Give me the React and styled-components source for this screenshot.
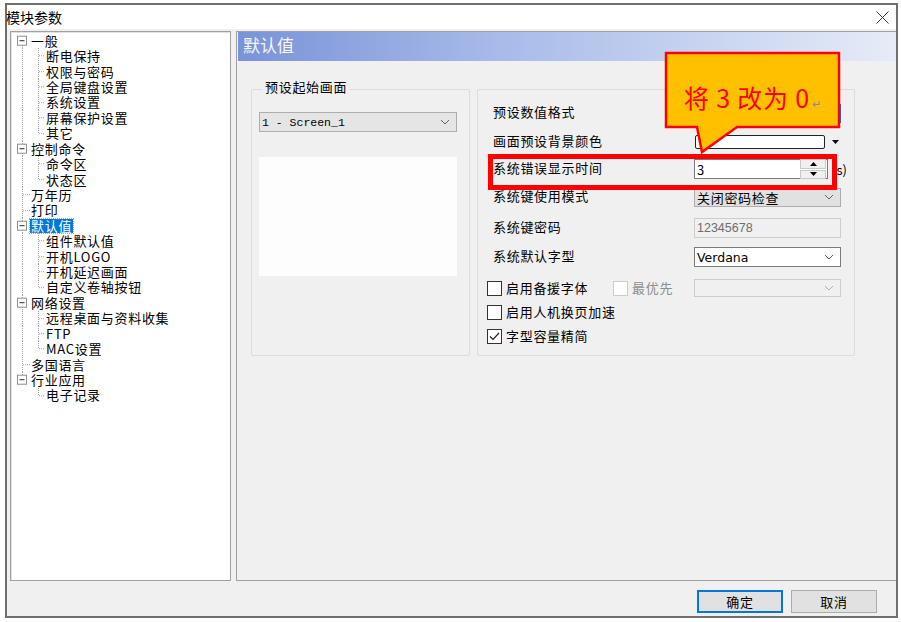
import React from 'react'
import styled, { createGlobalStyle } from 'styled-components'

const GlobalStyle = createGlobalStyle`
  html, body {
    margin: 0;
    padding: 0;
    background: #ffffff;
  }
  body {
    font-family: 'Noto Sans CJK SC', 'Noto Sans', sans-serif;
    color: #000;
  }
`

const tree = [
  { label: '一般', children: ['断电保持', '权限与密码', '全局键盘设置', '系统设置', '屏幕保护设置', '其它'] },
  { label: '控制命令', children: ['命令区', '状态区'] },
  { label: '万年历' },
  { label: '打印' },
  { label: '默认值', selected: true, children: ['组件默认值', '开机LOGO', '开机延迟画面', '自定义卷轴按钮'] },
  { label: '网络设置', children: ['远程桌面与资料收集', 'FTP', 'MAC设置'] },
  { label: '多国语言' },
  { label: '行业应用', children: ['电子记录'] }
]

// flatten the tree into rows with the info needed to draw connectors
const buildRows = () => {
  const rows = []
  tree.forEach((node, i) => {
    const first = i === 0
    const last = i === tree.length - 1
    rows.push({ label: node.label, root: true, first, last, hasKids: !!node.children, selected: node.selected })
    ;(node.children || []).forEach((c, j) => {
      rows.push({ label: c, root: false, parentLast: last, lastChild: j === node.children.length - 1 })
    })
  })
  return rows
}

const ROW_H = 15.43

const Page = styled.div`
  position: relative;
  width: 901px;
  height: 622px;
  padding: 3px 0 0 5px;
  box-sizing: border-box;
`

const Window = styled.div`
  width: 893px;
  height: 615px;
  box-sizing: border-box;
  border: 2px solid #6e6e6e;
  display: flex;
  flex-direction: column;
  background: #f0f0f0;
`

const TitleBar = styled.div`
  height: 24px;
  background: #ffffff;
  display: flex;
  align-items: center;
  justify-content: space-between;
  padding-right: 7px;
`

const Title = styled.span`
  font-size: 14px;
  line-height: 24px;
  margin-left: -1px;
`

const Main = styled.div`
  display: flex;
  padding: 2px 0 0 3px;
`

const TreePanel = styled.div`
  width: 221px;
  height: 550px;
  box-sizing: border-box;
  background: #ffffff;
  border: 1px solid #a0a0a0;
  box-shadow: inset 1px 1px 0 #e3e3e3;
  padding-top: 1px;
`

const TreeRow = styled.div`
  height: ${ROW_H}px;
  display: flex;
  align-items: center;
  font-size: 13px;
  letter-spacing: 0.7px;
  line-height: ${ROW_H}px;
  white-space: nowrap;
`

const TreeLabel = styled.span`
  padding: 0 1px;
  margin-left: -1px;
  line-height: 14px;
  background: ${p => (p.$selected ? '#0078d7' : 'transparent')};
  color: ${p => (p.$selected ? '#ffffff' : '#000000')};
  outline: ${p => (p.$selected ? '1px dotted #e8a040' : 'none')};
`

const RightPanel = styled.div`
  flex: 1;
  height: 550px;
  box-sizing: border-box;
  margin-left: 5px;
  border: 1px solid #a0a0a0;
  border-right: none;
  padding: 0 0 0 1px;
`

const Header = styled.div`
  height: 29px;
  background: linear-gradient(to right, #7993d7 0%, #a8bbe9 40%, #e6ebf7 100%);
  color: #f6f6f6;
  font-size: 17px;
  line-height: 26px;
  padding-left: 5px;
`

const Content = styled.div`
  display: flex;
  align-items: flex-start;
  gap: 7px;
  padding: 28px 0 0 13px;
`

const GroupBox = styled.div`
  width: ${p => p.$w}px;
  height: 267px;
  box-sizing: border-box;
  border: 1px solid #dcdcdc;
  border-radius: 2px;
  padding: ${p => p.$pad};
  font-size: 13px;
  letter-spacing: 0.7px;
`

const Legend = styled.div`
  width: fit-content;
  margin: -11px 0 0 3px;
  padding: 0 3px;
  background: #f0f0f0;
  line-height: 16px;
`

const ScreenCombo = styled.div`
  margin-top: 17px;
  width: 198px;
  height: 20px;
  box-sizing: border-box;
  background: #e5e5e5;
  border: 1px solid #adadad;
  display: flex;
  align-items: center;
  justify-content: space-between;
  padding: 0 6px 0 2px;
  font-family: 'Liberation Mono', 'DejaVu Sans Mono', monospace;
  font-size: 11.5px;
  letter-spacing: 0;
`

const Preview = styled.div`
  margin-top: 25px;
  width: 198px;
  height: 119px;
  background: #fdfdfd;
`

const FieldRow = styled.div`
  display: flex;
  align-items: center;
  height: 20px;
  margin-top: ${p => p.$mt || 0}px;
  padding-left: ${p => p.$pl || 0}px;
`

const FieldLabel = styled.div`
  width: 216px;
  box-sizing: border-box;
  padding: 0 0 3px 15px;
  white-space: nowrap;
`

const Box = styled.div`
  width: ${p => p.$w || 147}px;
  height: ${p => p.$h || 20}px;
  box-sizing: border-box;
  background: ${p => p.$bg || '#ffffff'};
  border: 1px solid ${p => p.$bd || '#7a7a7a'};
  color: ${p => p.$fg || '#000'};
  display: flex;
  align-items: center;
  justify-content: space-between;
  padding: 0 6px 0 2px;
  font-size: 13px;
  letter-spacing: 0;
  white-space: nowrap;
  overflow: hidden;
`

const Swatch = styled.div`
  width: 130px;
  height: 14px;
  margin-left: 1px;
  box-sizing: border-box;
  border: 1px solid #222;
  border-radius: 2px;
  background: #fff;
`

const SpinWrap = styled.div`
  width: 134px;
  height: 20px;
  box-sizing: border-box;
  border: 1px solid #7a7a7a;
  background: #fff;
  display: flex;
  align-items: center;
  justify-content: space-between;
  padding-left: 2px;
  font-size: 13px;
`

const SpinButtons = styled.div`
  display: flex;
  flex-direction: column;
  gap: 1px;
  margin-right: 1px;
`

const SpinBtn = styled.div`
  width: 24px;
  height: 7.5px;
  background: #f0f0f0;
  border: 1px solid #c8c8c8;
  display: flex;
  align-items: center;
  justify-content: center;
`

const Unit = styled.span`
  margin-left: 4px;
  letter-spacing: 0;
`

const CheckItem = styled.div`
  display: flex;
  align-items: center;
  gap: 4px;
  width: ${p => (p.$w ? `${p.$w}px` : 'auto')};
  color: ${p => (p.$disabled ? '#8d8d8d' : '#000')};

  & > span {
    padding-bottom: 2px;
  }
`

const CheckBox = styled.div`
  width: 15px;
  height: 15px;
  box-sizing: border-box;
  border: 1px solid ${p => (p.$disabled ? '#cccccc' : '#333333')};
  background: #fff;
  display: flex;
  align-items: center;
  justify-content: center;
`

const Footer = styled.div`
  flex: 1;
  display: flex;
  justify-content: flex-end;
  gap: 8px;
  padding: 9px 19px 0 0;
`

const Button = styled.div`
  width: 86px;
  height: 23px;
  box-sizing: border-box;
  background: #e1e1e1;
  border: ${p => (p.$primary ? '2px solid #0078d7' : '1px solid #adadad')};
  display: flex;
  align-items: center;
  justify-content: center;
  font-size: 13px;
  letter-spacing: 0.7px;
`

// annotation overlays
const RedFrame = styled.div`
  position: absolute;
  left: 488px;
  top: 154px;
  width: 349px;
  height: 36px;
  box-sizing: border-box;
  border: 5px solid #ff0000;
`

const Callout = styled.div`
  position: absolute;
  left: 664px;
  top: 51px;
  width: 178px;
  height: 104px;
`

const CalloutText = styled.div`
  position: relative;
  padding: 31px 0 0 20px;
  font-size: 25px;
  line-height: 30px;
  letter-spacing: 0.8px;
  color: #ff0000;
  white-space: pre;
`

const ReturnMark = styled.span`
  font-size: 11px;
  color: #8a8a8a;
  margin-left: 2px;
`

const Chevron = () => (
  <svg width='10' height='6' viewBox='0 0 10 6'>
    <polyline points='1,1 5,5 9,1' fill='none' stroke='#606060' strokeWidth='1' />
  </svg>
)

const Connector = ({ row }) => {
  const h = ROW_H
  const c = h / 2
  const dash = '1 1'
  const stroke = '#a0a0a0'
  if (row.root) {
    const y1 = row.first ? c : 0
    const y2 = row.last ? c : h
    return (
      <svg width='20' height={h} style={{ flex: 'none' }}>
        <line x1='11.5' x2='11.5' y1={y1} y2={y2} stroke={stroke} strokeDasharray={dash} />
        {row.hasKids ? (
          <g>
            <rect x='6.5' y={c - 4.5} width='9' height='9' fill='#fff' stroke='#919191' />
            <line x1='8.5' x2='13.5' y1={c} y2={c} stroke='#2b2b2b' />
          </g>
        ) : (
          <line x1='12' x2='19' y1={c} y2={c} stroke={stroke} strokeDasharray={dash} />
        )}
      </svg>
    )
  }
  return (
    <svg width='35' height={h} style={{ flex: 'none' }}>
      {!row.parentLast && <line x1='11.5' x2='11.5' y1='0' y2={h} stroke={stroke} strokeDasharray={dash} />}
      <line x1='27.5' x2='27.5' y1='0' y2={row.lastChild ? c : h} stroke={stroke} strokeDasharray={dash} />
      <line x1='28' x2='34' y1={c} y2={c} stroke={stroke} strokeDasharray={dash} />
    </svg>
  )
}

const App = () => {
  const rows = buildRows()

  return (
    <Page>
      <GlobalStyle />
      <Window>
        <TitleBar>
          <Title>模块参数</Title>
          <svg width='13' height='13' viewBox='0 0 13 13'>
            <path d='M0.5 0.5 L12.5 12.5 M12.5 0.5 L0.5 12.5' stroke='#333' strokeWidth='1' />
          </svg>
        </TitleBar>

        <Main>
          <TreePanel>
            {rows.map((row, i) => (
              <TreeRow key={i}>
                <Connector row={row} />
                <TreeLabel $selected={row.selected}>{row.label}</TreeLabel>
              </TreeRow>
            ))}
          </TreePanel>

          <RightPanel>
            <Header>默认值</Header>
            <Content>
              <GroupBox $w={219} $pad='0 0 0 7px'>
                <Legend>预设起始画面</Legend>
                <ScreenCombo>
                  <span>1 - Screen_1</span>
                  <Chevron />
                </ScreenCombo>
                <Preview />
              </GroupBox>

              <GroupBox $w={378} $pad='13px 0 0 0'>
                <FieldRow>
                  <FieldLabel>预设数值格式</FieldLabel>
                  <Box $h={19} $bd='#0078d7' />
                </FieldRow>
                <FieldRow $mt={9}>
                  <FieldLabel>画面预设背景颜色</FieldLabel>
                  <Swatch />
                  <svg width='7' height='4' viewBox='0 0 7 4' style={{ marginLeft: 7 }}>
                    <polygon points='0,0 7,0 3.5,4' fill='#000' />
                  </svg>
                </FieldRow>
                <FieldRow $mt={7}>
                  <FieldLabel>系统错误显示时间</FieldLabel>
                  <SpinWrap>
                    <span>3</span>
                    <SpinButtons>
                      <SpinBtn>
                        <svg width='7' height='4' viewBox='0 0 7 4'>
                          <polygon points='0,4 7,4 3.5,0' fill='#000' />
                        </svg>
                      </SpinBtn>
                      <SpinBtn>
                        <svg width='7' height='4' viewBox='0 0 7 4'>
                          <polygon points='0,0 7,0 3.5,4' fill='#000' />
                        </svg>
                      </SpinBtn>
                    </SpinButtons>
                  </SpinWrap>
                  <Unit>(s)</Unit>
                </FieldRow>
                <FieldRow $mt={8}>
                  <FieldLabel>系统键使用模式</FieldLabel>
                  <Box $h={19} $bg='#e1e1e1' $bd='#adadad'>
                    <span style={{ letterSpacing: '0.7px' }}>关闭密码检查</span>
                    <Chevron />
                  </Box>
                </FieldRow>
                <FieldRow $mt={11}>
                  <FieldLabel>系统键密码</FieldLabel>
                  <Box $bg='#f0f0f0' $bd='#cccccc' $fg='#6d6d6d'>
                    <span style={{ fontFamily: "'Liberation Sans', sans-serif", fontSize: '12.5px' }}>12345678</span>
                  </Box>
                </FieldRow>
                <FieldRow $mt={9}>
                  <FieldLabel>系统默认字型</FieldLabel>
                  <Box>
                    <span style={{ fontFamily: "'DejaVu Sans', sans-serif", fontSize: '12.5px' }}>Verdana</span>
                    <Chevron />
                  </Box>
                </FieldRow>
                <FieldRow $mt={11} $pl={9}>
                  <CheckItem $w={126}>
                    <CheckBox />
                    <span>启用备援字体</span>
                  </CheckItem>
                  <CheckItem $w={81} $disabled>
                    <CheckBox $disabled />
                    <span>最优先</span>
                  </CheckItem>
                  <Box $h={18} $bg='#f0f0f0' $bd='#cccccc'>
                    <span />
                    <svg width='10' height='6' viewBox='0 0 10 6'>
                      <polyline points='1,1 5,5 9,1' fill='none' stroke='#b0b0b0' strokeWidth='1' />
                    </svg>
                  </Box>
                </FieldRow>
                <FieldRow $mt={4} $pl={9}>
                  <CheckItem>
                    <CheckBox />
                    <span>启用人机换页加速</span>
                  </CheckItem>
                </FieldRow>
                <FieldRow $mt={4} $pl={9}>
                  <CheckItem>
                    <CheckBox>
                      <svg width='11' height='9' viewBox='0 0 11 9'>
                        <polyline points='1,4.5 4,7.5 10,1' fill='none' stroke='#222' strokeWidth='1.2' />
                      </svg>
                    </CheckBox>
                    <span>字型容量精简</span>
                  </CheckItem>
                </FieldRow>
              </GroupBox>
            </Content>
          </RightPanel>
        </Main>

        <Footer>
          <Button $primary>确定</Button>
          <Button>取消</Button>
        </Footer>
      </Window>

      <RedFrame />
      <Callout>
        <svg width='178' height='104' viewBox='0 0 178 104' style={{ position: 'absolute', left: 0, top: 0 }}>
          <path
            d='M2 2 H175 V76 H73 L38 101 L33 76 H2 Z'
            fill='#ffc000'
            stroke='#ff0000'
            strokeWidth='2.5'
          />
        </svg>
        <CalloutText>
          {'将 3 改为 0'}
          <ReturnMark>↵</ReturnMark>
        </CalloutText>
      </Callout>
    </Page>
  )
}

export default App
